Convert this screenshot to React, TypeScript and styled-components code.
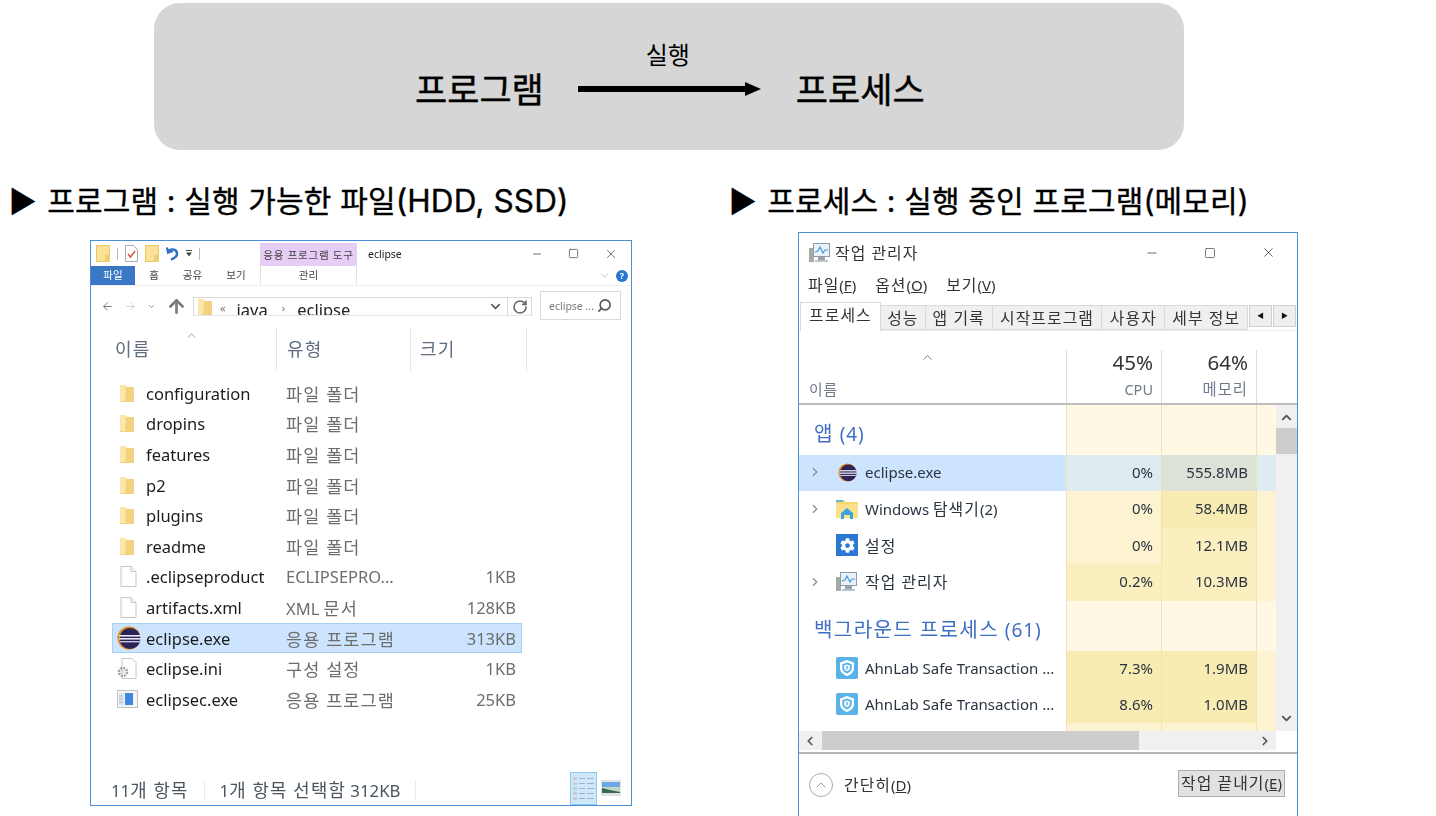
import type { ReactNode } from 'react';
import styled, { createGlobalStyle } from 'styled-components';
import { FaCog } from 'react-icons/fa';
import {
  ArrowLeft,
  ArrowRight,
  ArrowUp,
  ChevronDown,
  ChevronLeft,
  ChevronRight,
  ChevronUp,
  Minus,
  RotateCw,
  Search,
  Square,
  X,
} from 'lucide-react';

const UI_FONT = `'Noto Sans', 'Noto Sans CJK KR', sans-serif`;
const SLIDE_FONT = `'Inter', 'Noto Sans CJK KR', sans-serif`;

const GlobalStyle = createGlobalStyle`
  html, body {
    margin: 0;
    padding: 0;
    background: #fff;
  }
  * {
    box-sizing: border-box;
  }
`;

const Page = styled.div`
  width: 1436px;
  height: 816px;
  overflow: hidden;
  background: #fff;
  padding-top: 3px;
  font-family: ${SLIDE_FONT};
`;

/* top banner */
const Banner = styled.div`
  margin-left: 154px;
  width: 1030px;
  height: 147px;
  border-radius: 26px;
  background: #d6d6d6;
  padding: 38px 0 0 261px;
  display: flex;
  align-items: flex-start;
  color: #000;
`;

const BannerWord = styled.div`
  font-size: 35px;
  font-weight: 400;
  -webkit-text-stroke: 0.4px #000;
  line-height: 48px;
  height: 48px;
  margin-top: 25px;
  white-space: nowrap;
`;

const Flow = styled.div`
  width: 183px;
  margin: 0 35px 0 34px;
  text-align: center;
  font-size: 24px;
  line-height: 30px;
  padding-right: 3px;
`;

const FlowArrow = styled.svg`
  display: block;
  margin-top: 11px;
`;

const Columns = styled.div`
  display: grid;
  grid-template-columns: 722px 1fr;
  padding: 33px 0 0 7px;
`;

const Section = styled.section`
  min-width: 0;
`;

const Heading = styled.h2<{ $left: number }>`
  margin: 0 0 0 ${({ $left }) => $left}px;
  font-size: 30px;
  font-weight: 400;
  -webkit-text-stroke: 0.35px #000;
  letter-spacing: 0.15px;
  line-height: 36px;
  height: 36px;
  color: #000;
  white-space: nowrap;
`;

const Bullet = styled.span`
  margin-right: 2px;
`;

const Latin = styled.span`
  font-size: 31.5px;
`;

const Win = styled.div<{ $left: number; $top: number; $w: number; $h: number }>`
  margin-left: ${({ $left }) => $left}px;
  margin-top: ${({ $top }) => $top}px;
  width: ${({ $w }) => $w}px;
  height: ${({ $h }) => $h}px;
  border: 1px solid #4a90d6;
  background: #fff;
  font-family: ${UI_FONT};
  display: flex;
  flex-direction: column;
  overflow: hidden;
  filter: blur(0.35px);
`;

//korean glyphs of the windows are wider than the installed font
const Ko = styled.span`
  font-size: 1.06em;
  letter-spacing: 0.065em;
`;

const Accel = styled.u`
  text-underline-offset: 1px;
`;

/* explorer */
const QuickBar = styled.div`
  height: 25px;
  display: flex;
  align-items: center;
  padding-left: 5px;
  color: #444;
`;

const QuickGroup = styled.div`
  width: 164px;
  display: flex;
  align-items: center;
  gap: 7px;
`;

const BarSep = styled.span`
  width: 1px;
  height: 12px;
  background: #bbb;
`;

const ToolTab = styled.div`
  width: 97px;
  height: 23px;
  margin-top: 2px;
  align-self: flex-start;
  background: #e5cdf6;
  font-size: 10px;
  line-height: 24px;
  text-align: center;
  color: #444;
  white-space: nowrap;
`;

const WinTitle = styled.div`
  font-size: 10.5px;
  margin-left: 11px;
  color: #222;
  flex: 1;
`;

const WinControls = styled.div<{ $gap: number; $pad: number }>`
  display: flex;
  align-items: center;
  gap: ${({ $gap }) => $gap}px;
  padding-right: ${({ $pad }) => $pad}px;
  color: #333;
`;

const RibbonTabs = styled.div`
  height: 20px;
  display: flex;
  align-items: stretch;
  font-size: 10.5px;
  color: #444;
  border-bottom: 1px solid #eee;
`;

const RibbonTab = styled.div<{ $w: number; $active?: boolean; $tool?: boolean }>`
  width: ${({ $w }) => $w}px;
  text-align: center;
  line-height: 19px;
  white-space: nowrap;
  background: ${({ $active }) => ($active ? '#3a78c6' : 'transparent')};
  color: ${({ $active }) => ($active ? '#fff' : '#444')};
  border-left: ${({ $tool }) => ($tool ? '1px solid #e3e3e3' : '0')};
  border-right: ${({ $tool }) => ($tool ? '1px solid #e3e3e3' : '0')};
`;

const RibbonEnd = styled.div`
  margin-left: auto;
  padding-right: 3px;
  display: flex;
  align-items: center;
  gap: 5px;
  color: #9a9a9a;
`;

const HelpDot = styled.span`
  width: 12px;
  height: 12px;
  border-radius: 50%;
  background: #2a76d2;
  color: #fff;
  font-size: 9px;
  font-weight: 700;
  line-height: 12px;
  text-align: center;
`;

const NavBar = styled.div`
  height: 40px;
  display: flex;
  align-items: flex-start;
  padding: 5px 0 0 10px;
`;

const NavArrows = styled.div`
  width: 92px;
  height: 30px;
  display: flex;
  align-items: center;
  gap: 10px;
  color: #7a7a7a;
`;

const AddressBox = styled.div`
  width: 339px;
  height: 19px;
  margin-top: 6px;
  border: 1px solid #d9d9d9;
  border-bottom-color: #e6e6e6;
  display: flex;
  align-items: flex-start;
  overflow: hidden;
  padding-left: 4px;
  font-size: 16.5px;
  color: #222;
`;

const Crumb = styled.span<{ $left: number }>`
  margin-left: ${({ $left }) => $left}px;
  line-height: 24px;
  color: inherit;
`;

const CrumbMark = styled.span<{ $left: number }>`
  margin-left: ${({ $left }) => $left}px;
  line-height: 20px;
  font-size: 11px;
  color: #777;
`;

const AddressEnd = styled.div`
  margin-left: auto;
  display: flex;
  align-items: center;
  height: 100%;
  color: #555;
`;

const RefreshCell = styled.div`
  width: 24px;
  height: 100%;
  margin-left: 4px;
  border-left: 1px solid #d9d9d9;
  display: flex;
  align-items: center;
  justify-content: center;
  color: #666;
`;

const SearchBox = styled.div`
  width: 81px;
  height: 29px;
  margin-left: 8px;
  border: 1px solid #d9d9d9;
  display: flex;
  align-items: center;
  padding: 0 8px;
  justify-content: space-between;
  font-size: 10.5px;
  color: #777;
  white-space: nowrap;
`;

const ColumnHead = styled.div`
  height: 43px;
  margin-top: 2px;
  display: grid;
  grid-template-columns: 186px 134px 116px;
  font-size: 17px;
  color: #5f6f80;
`;

const HeadCell = styled.div<{ $pad: number }>`
  position: relative;
  padding: 8px 0 0 ${({ $pad }) => $pad}px;
  border-right: 1px solid #e3e6ea;
  line-height: 26px;
`;

const SortCaret = styled.span`
  position: absolute;
  top: -5px;
  left: 94px;
  color: #777;
`;

const FileList = styled.div`
  margin: 7px 0 0 21px;
  width: 410px;
`;

const FileRow = styled.div<{ $selected?: boolean }>`
  height: 30.6px;
  display: grid;
  grid-template-columns: 34px 140px 1fr 64px;
  align-items: center;
  font-size: 16.5px;
  white-space: nowrap;
  background: ${({ $selected }) => ($selected ? '#cce4fd' : 'transparent')};
  outline: ${({ $selected }) => ($selected ? '1px solid #a8d0f7' : '0')};
  outline-offset: -1px;
`;

const IconCell = styled.span<{ $left: number }>`
  display: flex;
  align-items: center;
  padding-left: ${({ $left }) => $left}px;
  height: 100%;
`;

const FileName = styled.span`
  color: #1c1c1c;
`;

const FileType = styled.span`
  color: #6d6d6d;
`;

const FileSize = styled.span`
  color: #6d6d6d;
  text-align: right;
  padding-right: 6px;
`;

const StatusBar = styled.div`
  margin-top: auto;
  height: 34px;
  display: flex;
  align-items: center;
  padding: 4px 0 0 20px;
  font-size: 16.8px;
  color: #4a5560;
  white-space: nowrap;
`;

const StatusPart = styled.span`
  padding-right: 15px;
  margin-right: 15px;
  border-right: 1px solid #eaeaea;
  line-height: 18px;
`;

const ViewBtn = styled.span<{ $active?: boolean }>`
  height: 33px;
  width: 27px;
  display: flex;
  align-items: center;
  justify-content: center;
  background: ${({ $active }) => ($active ? '#cde8fb' : 'transparent')};
  border: ${({ $active }) => ($active ? '1px solid #8fc9ef' : '0')};
`;

const ViewBtns = styled.div`
  margin: -4px 0 0 auto;
  padding-right: 7px;
  display: flex;
  align-items: center;
`;

/* task manager */
const TmTitle = styled.div`
  height: 39px;
  display: flex;
  align-items: center;
  padding-left: 10px;
  font-size: 15px;
  color: #333;
  gap: 5px;
  white-space: nowrap;
`;

const TmControls = styled(WinControls)`
  margin-left: auto;
  color: #444;
`;

const MenuBar = styled.div`
  height: 25px;
  display: flex;
  align-items: center;
  padding-left: 9px;
  gap: 19px;
  font-size: 15px;
  color: #333;
`;

const TabStrip = styled.div`
  height: 34px;
  display: flex;
  align-items: flex-end;
  padding: 0 1px;
  border-bottom: 1px solid #ececec;
  font-size: 15px;
  color: #333;
`;

const TmTab = styled.div<{ $w: number; $active?: boolean }>`
  width: ${({ $w }) => $w}px;
  height: ${({ $active }) => ($active ? 29 : 25)}px;
  margin-bottom: ${({ $active }) => ($active ? -1 : 0)}px;
  border: 1px solid #dadada;
  border-left-width: ${({ $active }) => ($active ? 1 : 0)}px;
  border-bottom-width: ${({ $active }) => ($active ? 0 : 1)}px;
  background: ${({ $active }) => ($active ? '#fff' : '#f0f0f0')};
  text-align: center;
  line-height: ${({ $active }) => ($active ? 24 : 24)}px;
  white-space: nowrap;
`;

const TabArrow = styled.div`
  width: 23px;
  height: 22px;
  margin: 0 0 3px 1px;
  background: #eee;
  border: 1px solid #cfcfcf;
  color: #111;
  font-size: 7px;
  line-height: 20px;
  text-align: center;
`;

const TmHead = styled.div`
  height: 74px;
  display: grid;
  grid-template-columns: 267px 95px 95px 1fr;
  border-bottom: 2px solid #bdbdbd;
  padding-top: 19px;
`;

const TmHeadName = styled.div`
  position: relative;
  padding: 28px 0 0 10px;
  font-size: 14px;
  line-height: 22px;
  color: #6d7a8a;
`;

const TmCaret = styled.span`
  position: absolute;
  top: -1px;
  left: 121px;
  color: #777;
`;

const TmHeadCol = styled.div`
  border-left: 1px solid #dcdcdc;
  text-align: right;
  padding-right: 8px;
  font-size: 14.5px;
  color: #6d7a8a;
  line-height: 21px;
`;

const TmPercent = styled.div`
  font-size: 20.5px;
  color: #333;
  line-height: 24px;
  margin-bottom: 5px;
`;

const TmBody = styled.div`
  height: 326px;
  display: flex;
  overflow: hidden;
`;

const TmRows = styled.div`
  width: 477px;
`;

const TmRow = styled.div<{ $h: number }>`
  height: ${({ $h }) => $h}px;
  display: grid;
  grid-template-columns: 267px 95px 95px 1fr;
  font-size: 15px;
  color: #2a3440;
`;

const NameCell = styled.div<{ $selected?: boolean }>`
  display: grid;
  grid-template-columns: 37px 29px 1fr;
  align-items: center;
  padding-bottom: 2px;
  white-space: nowrap;
  overflow: hidden;
  background: ${({ $selected }) => ($selected ? '#cce4fd' : '#fff')};
`;

const Twisty = styled.span`
  display: flex;
  justify-content: flex-end;
  padding-right: 14px;
  color: #8a8a8a;
`;

const GroupName = styled.div`
  padding: 11px 0 0 15px;
  font-size: 19px;
  letter-spacing: 0.9px;
  line-height: 34px;
  color: #3f6fc4;
  background: #fff;
  white-space: nowrap;
`;

const Cell = styled.div<{ $bg: string }>`
  background: ${({ $bg }) => $bg};
  border-left: 1px solid #eee2b6;
  text-align: right;
  padding-right: 8px;
  line-height: 34px;
`;

const EclipseSlot = styled.span`
  display: flex;
  padding-left: 2px;
`;

const VScroll = styled.div`
  flex: 1;
  background: #f0f0f0;
  display: flex;
  flex-direction: column;
  align-items: center;
  color: #555;
  padding-top: 5px;
`;

const VThumb = styled.div`
  width: 100%;
  height: 26px;
  margin-top: 3px;
  background: #cdcdcd;
`;

const HScroll = styled.div`
  height: 19px;
  width: 477px;
  background: #f0f0f0;
  display: flex;
  align-items: center;
  color: #555;
  padding: 0 4px;
`;

const HThumb = styled.div`
  width: 317px;
  height: 100%;
  margin: 0 auto 0 5px;
  background: #cdcdcd;
`;

const TmFooter = styled.div`
  flex: 1;
  border-top: 2px solid #b5b5b5;
  margin-top: 2px;
  display: flex;
  align-items: flex-start;
  padding: 16px 12px 0 10px;
  font-size: 15px;
  color: #333;
`;

const CollapseCircle = styled.span`
  width: 24px;
  height: 24px;
  margin-top: 3px;
  border: 1.5px solid #aaa;
  border-radius: 50%;
  display: flex;
  align-items: center;
  justify-content: center;
  color: #999;
`;

const CollapseLabel = styled.span`
  margin-left: 11px;
  line-height: 30px;
`;

const EndTaskBtn = styled.div`
  margin-left: auto;
  width: 107px;
  height: 27px;
  background: #e1e1e1;
  border: 1px solid #adadad;
  text-align: center;
  line-height: 25px;
  white-space: nowrap;
`;

/* icons */
const FolderIcon = () => (
  <svg width="15" height="19" viewBox="0 0 15 19">
    <path d="M0 1h5l2 2h7v15H0z" fill="#f4d583" />
    <path d="M0 1h6v16H0z" fill="#fbe7ac" />
    <path d="M6 3l8 0v15H5z" fill="#f2d27c" />
  </svg>
);

const DocIcon = () => (
  <svg width="17" height="21" viewBox="0 0 17 21">
    <path d="M1 .5h10l5 5v15H1z" fill="#fff" stroke="#c6c6c6" />
    <path d="M11 .5v5h5" fill="#f2f2f2" stroke="#c6c6c6" />
  </svg>
);

const EclipseIcon = ({ size = 24 }: { size?: number }) => (
  <svg width={size} height={size} viewBox="0 0 24 24">
    <circle cx="12" cy="12" r="11.5" fill="#e08a1e" />
    <circle cx="13" cy="12.5" r="10.5" fill="#2c2358" />
    <rect x="2" y="9" width="22" height="1.6" fill="#e8e8f4" />
    <rect x="2" y="12" width="22" height="1.6" fill="#e8e8f4" />
    <rect x="3" y="15" width="20" height="1.4" fill="#c9c9de" />
  </svg>
);

const IniIcon = () => (
  <svg width="21" height="21" viewBox="0 0 21 21">
    <path d="M5 .5h10l4 4v16H5z" fill="#fff" stroke="#c6c6c6" />
    <circle cx="6" cy="14" r="4" fill="none" stroke="#9aa3ab" strokeWidth="2.6" strokeDasharray="2 1.1" />
    <circle cx="6" cy="14" r="1.4" fill="#d5dade" />
  </svg>
);

const ConsoleIcon = () => (
  <svg width="21" height="19" viewBox="0 0 21 19">
    <rect x=".5" y=".5" width="20" height="17" fill="#f4f4f4" stroke="#c4c4c4" />
    <rect x="2" y="3" width="5" height="12" fill="#dfe6ee" />
    <path d="M2 6h4M2 9h4M2 12h4" stroke="#9fb6cc" />
    <rect x="8" y="3" width="8" height="12" fill="#3f86e0" />
  </svg>
);

const QuickFolder = () => (
  <svg width="14" height="17" viewBox="0 0 14 17">
    <rect x=".5" y=".5" width="13" height="16" fill="#fbe19a" stroke="#e9c864" />
    <rect x="9" y="10" width="5" height="7" fill="#f0cc72" />
  </svg>
);

const QuickCheck = () => (
  <svg width="13" height="17" viewBox="0 0 13 17">
    <path d="M.5.5h8l4 4v12H.5z" fill="#fff" stroke="#aaa" />
    <path d="M3 9l2.5 3L10 6" fill="none" stroke="#d8503a" strokeWidth="1.4" />
  </svg>
);

const UndoIcon = () => (
  <svg width="13" height="15" viewBox="0 0 13 15">
    <path d="M1 1.5l1 5 5-1.5" fill="none" stroke="#2a70c4" strokeWidth="2.2" />
    <path d="M2 5c4-3 9-1.500 9 2.500 0 3-3 5-6 6" fill="none" stroke="#2a70c4" strokeWidth="2.4" />
  </svg>
);

const DropMark = () => (
  <svg width="6" height="7" viewBox="0 0 6 7">
    <rect y="0" width="6" height="1" fill="#444" />
    <path d="M0 2.500h6L3 6.500z" fill="#444" />
  </svg>
);

const MonitorIcon = () => (
  <svg width="21" height="19" viewBox="0 0 21 19">
    <rect x="0" y="5" width="5" height="14" fill="#a8a8a8" />
    <rect x="1" y="7" width="2" height="2" fill="#74c98a" />
    <rect x="4.500" y=".5" width="16" height="13" fill="#e9f2f8" stroke="#8f9aa3" />
    <path d="M6 9l3-1 2-4 3 6 2-3h3" fill="none" stroke="#4a9ad4" strokeWidth="1.200" />
    <rect x="9" y="14" width="7" height="3" fill="#9aa3ab" />
    <rect x="6" y="17" width="13" height="2" fill="#bcc3c9" />
  </svg>
);

const ExplorerIcon = () => (
  <svg width="22" height="20" viewBox="0 0 22 20">
    <path d="M0 1h8l2 2h12v16H0z" fill="#f7d774" />
    <rect x="0" y="5" width="22" height="14" fill="#fbe08c" />
    <rect x="0" y="1" width="7" height="2" fill="#5ab4dc" />
    <path d="M5 14l6-5 6 5v6h-3v-4H8v4H5z" fill="#3ba4dc" />
  </svg>
);

const SettingsTile = styled.span`
  width: 22px;
  height: 22px;
  background: #2b78d4;
  color: #fff;
  display: flex;
  align-items: center;
  justify-content: center;
`;

const ShieldIcon = () => (
  <svg width="22" height="22" viewBox="0 0 22 22">
    <rect width="22" height="22" rx="2" fill="#58b3e8" />
    <path d="M11 3l7 2.500v5.500c0 4-3 6.500-7 8-4-1.500-7-4-7-8V5.500z" fill="#fff" />
    <path d="M11 5.500l4.700 1.700v3.800c0 2.700-2 4.400-4.700 5.500-2.700-1.100-4.700-2.800-4.700-5.500V7.200z" fill="#58b3e8" />
    <path d="M11 7.500l2.800 1v2.500c0 1.600-1.200 2.600-2.800 3.300-1.600-.7-2.800-1.700-2.800-3.300V8.500z" fill="#fff" />
    <rect x="10.300" y="9" width="1.400" height="3.500" fill="#58b3e8" />
  </svg>
);

const DetailsIcon = () => (
  <svg width="22" height="25" viewBox="0 0 22 25">
    {[2, 7, 12, 17, 22].map((y) => (
      <g key={y}>
        <rect x="0" y={y - 1} width="4" height="3" fill="#c3cdd5" />
        <rect x="6" y={y} width="6" height="1" fill="#9fb3c2" />
        <rect x="14" y={y} width="7" height="1" fill="#9fb3c2" />
      </g>
    ))}
  </svg>
);

const PictureIcon = () => (
  <svg width="20" height="16" viewBox="0 0 20 16">
    <rect width="20" height="16" fill="#e2e2e2" />
    <rect x="1" y="2" width="18" height="5" fill="#6fa6e8" />
    <rect x="1" y="7" width="18" height="5" fill="#bcd9c2" />
    <path d="M1 8l8 2 10 2v1H1z" fill="#39675a" />
  </svg>
);

type FileItem = {
  name: string;
  type: ReactNode;
  size?: string;
  icon: 'folder' | 'doc' | 'eclipse' | 'ini' | 'console';
  selected?: boolean;
};

const files: FileItem[] = [
  { name: 'configuration', type: <Ko>파일 폴더</Ko>, icon: 'folder' },
  { name: 'dropins', type: <Ko>파일 폴더</Ko>, icon: 'folder' },
  { name: 'features', type: <Ko>파일 폴더</Ko>, icon: 'folder' },
  { name: 'p2', type: <Ko>파일 폴더</Ko>, icon: 'folder' },
  { name: 'plugins', type: <Ko>파일 폴더</Ko>, icon: 'folder' },
  { name: 'readme', type: <Ko>파일 폴더</Ko>, icon: 'folder' },
  { name: '.eclipseproduct', type: 'ECLIPSEPRO...', size: '1KB', icon: 'doc' },
  { name: 'artifacts.xml', type: <>XML <Ko>문서</Ko></>, size: '128KB', icon: 'doc' },
  { name: 'eclipse.exe', type: <Ko>응용 프로그램</Ko>, size: '313KB', icon: 'eclipse', selected: true },
  { name: 'eclipse.ini', type: <Ko>구성 설정</Ko>, size: '1KB', icon: 'ini' },
  { name: 'eclipsec.exe', type: <Ko>응용 프로그램</Ko>, size: '25KB', icon: 'console' },
];

const fileIcon = (icon: FileItem['icon']) => {
  if (icon === 'folder') return <FolderIcon />;
  if (icon === 'doc') return <DocIcon />;
  if (icon === 'eclipse') return <EclipseIcon />;
  if (icon === 'ini') return <IniIcon />;
  return <ConsoleIcon />;
};

//heat colours of the task manager cells
const PALE = '#fff8e4';
const LIGHT = '#fdf3d0';
const MID = '#fbefc0';
const STRONG = '#f8ecb2';

const Explorer = () => (
  <Win $left={83} $top={21} $w={542} $h={566}>
    <QuickBar>
      <QuickGroup>
        <QuickFolder />
        <BarSep />
        <QuickCheck />
        <QuickFolder />
        <UndoIcon />
        <DropMark />
        <BarSep />
      </QuickGroup>
      <ToolTab>
        <Ko>응용 프로그램 도구</Ko>
      </ToolTab>
      <WinTitle>eclipse</WinTitle>
      <WinControls $gap={25} $pad={13}>
        <Minus size={12} strokeWidth={1.4} />
        <Square size={11} strokeWidth={1.4} />
        <X size={14} strokeWidth={1.2} />
      </WinControls>
    </QuickBar>
    <RibbonTabs>
      <RibbonTab $w={44} $active>파일</RibbonTab>
      <RibbonTab $w={38}>홈</RibbonTab>
      <RibbonTab $w={39}>공유</RibbonTab>
      <RibbonTab $w={48}>보기</RibbonTab>
      <RibbonTab $w={97} $tool>관리</RibbonTab>
      <RibbonEnd>
        <ChevronDown size={13} strokeWidth={1.2} />
        <HelpDot>?</HelpDot>
      </RibbonEnd>
    </RibbonTabs>
    <NavBar>
      <NavArrows>
        <ArrowLeft size={13} strokeWidth={1.8} />
        <ArrowRight size={13} strokeWidth={1.8} color="#d4d4d4" />
        <ChevronDown size={9} strokeWidth={2} />
        <ArrowUp size={21} strokeWidth={3} />
      </NavArrows>
      <AddressBox>
        <FolderIcon />
        <CrumbMark $left={7}>«</CrumbMark>
        <Crumb $left={11}>java</Crumb>
        <CrumbMark $left={14}>›</CrumbMark>
        <Crumb $left={12}>eclipse</Crumb>
        <AddressEnd>
          <ChevronDown size={15} strokeWidth={2.4} />
          <RefreshCell>
            <RotateCw size={16} strokeWidth={2.4} />
          </RefreshCell>
        </AddressEnd>
      </AddressBox>
      <SearchBox>
        eclipse ...
        <Search size={15} strokeWidth={2.6} color="#555" style={{ transform: 'scaleX(-1)' }} />
      </SearchBox>
    </NavBar>
    <ColumnHead>
      <HeadCell $pad={24}>
        <Ko>이름</Ko>
        <SortCaret>
          <ChevronUp size={13} strokeWidth={1.4} />
        </SortCaret>
      </HeadCell>
      <HeadCell $pad={10}>
        <Ko>유형</Ko>
      </HeadCell>
      <HeadCell $pad={9}>
        <Ko>크기</Ko>
      </HeadCell>
    </ColumnHead>
    <FileList>
      {files.map((file) => (
        <FileRow key={file.name} $selected={file.selected}>
          <IconCell $left={file.icon === 'folder' || file.icon === 'doc' ? 8 : 5}>{fileIcon(file.icon)}</IconCell>
          <FileName>{file.name}</FileName>
          <FileType>{file.type}</FileType>
          <FileSize>{file.size}</FileSize>
        </FileRow>
      ))}
    </FileList>
    <StatusBar>
      <StatusPart>
        11<Ko>개 항목</Ko>
      </StatusPart>
      <StatusPart>
        1<Ko>개 항목 선택함</Ko> 312KB
      </StatusPart>
      <ViewBtns>
        <ViewBtn $active>
          <DetailsIcon />
        </ViewBtn>
        <ViewBtn>
          <PictureIcon />
        </ViewBtn>
      </ViewBtns>
    </StatusBar>
  </Win>
);

const AppRow = ({
  h,
  icon,
  name,
  cpu,
  mem,
  twisty,
  colors,
  selected,
}: {
  h: number;
  icon: ReactNode;
  name: ReactNode;
  cpu: string;
  mem: string;
  twisty?: boolean;
  colors: [string, string, string];
  selected?: boolean;
}) => (
  <TmRow $h={h}>
    <NameCell $selected={selected}>
      <Twisty>{twisty && <ChevronRight size={14} strokeWidth={2} />}</Twisty>
      {icon}
      <span>{name}</span>
    </NameCell>
    <Cell $bg={colors[0]}>{cpu}</Cell>
    <Cell $bg={colors[1]}>{mem}</Cell>
    <Cell $bg={colors[2]} />
  </TmRow>
);

const GroupRow = ({ title }: { title: ReactNode }) => (
  <TmRow $h={50}>
    <GroupName>{title}</GroupName>
    <Cell $bg={PALE} />
    <Cell $bg={PALE} />
    <Cell $bg={PALE} />
  </TmRow>
);

const TaskManager = () => (
  <Win $left={69} $top={13} $w={500} $h={600}>
    <TmTitle>
      <MonitorIcon />
      <Ko>작업 관리자</Ko>
      <TmControls $gap={45} $pad={21}>
        <Minus size={14} strokeWidth={1.4} />
        <Square size={12} strokeWidth={1.4} />
        <X size={15} strokeWidth={1.3} />
      </TmControls>
    </TmTitle>
    <MenuBar>
      <span>
        <Ko>파일</Ko>(<Accel>F</Accel>)
      </span>
      <span>
        <Ko>옵션</Ko>(<Accel>O</Accel>)
      </span>
      <span>
        <Ko>보기</Ko>(<Accel>V</Accel>)
      </span>
    </MenuBar>
    <TabStrip>
      <TmTab $w={81} $active>
        <Ko>프로세스</Ko>
      </TmTab>
      <TmTab $w={45}>
        <Ko>성능</Ko>
      </TmTab>
      <TmTab $w={67}>
        <Ko>앱 기록</Ko>
      </TmTab>
      <TmTab $w={110}>
        <Ko>시작프로그램</Ko>
      </TmTab>
      <TmTab $w={63}>
        <Ko>사용자</Ko>
      </TmTab>
      <TmTab $w={83}>
        <Ko>세부 정보</Ko>
      </TmTab>
      <TabArrow>◀</TabArrow>
      <TabArrow>▶</TabArrow>
    </TabStrip>
    <TmHead>
      <TmHeadName>
        <Ko>이름</Ko>
        <TmCaret>
          <ChevronUp size={15} strokeWidth={1.5} />
        </TmCaret>
      </TmHeadName>
      <TmHeadCol>
        <TmPercent>45%</TmPercent>
        CPU
      </TmHeadCol>
      <TmHeadCol>
        <TmPercent>64%</TmPercent>
        <Ko>메모리</Ko>
      </TmHeadCol>
      <TmHeadCol />
    </TmHead>
    <TmBody>
      <TmRows>
        <GroupRow title={<><Ko>앱</Ko> (4)</>} />
        <AppRow
          h={36}
          twisty
          selected
          icon={
            <EclipseSlot>
              <EclipseIcon size={19} />
            </EclipseSlot>
          }
          name="eclipse.exe"
          cpu="0%"
          mem="555.8MB"
          colors={['#deebf0', '#dde2d8', '#deebf0']}
        />
        <AppRow
          h={37}
          twisty
          icon={<ExplorerIcon />}
          name={<>Windows <Ko>탐색기</Ko>(2)</>}
          cpu="0%"
          mem="58.4MB"
          colors={[LIGHT, STRONG, LIGHT]}
        />
        <AppRow
          h={36}
          icon={
            <SettingsTile>
              <FaCog size={15} />
            </SettingsTile>
          }
          name={<Ko>설정</Ko>}
          cpu="0%"
          mem="12.1MB"
          colors={[LIGHT, MID, LIGHT]}
        />
        <AppRow
          h={37}
          twisty
          icon={<MonitorIcon />}
          name={<Ko>작업 관리자</Ko>}
          cpu="0.2%"
          mem="10.3MB"
          colors={[MID, MID, LIGHT]}
        />
        <GroupRow title={<><Ko>백그라운드 프로세스</Ko> (61)</>} />
        <AppRow
          h={36}
          icon={<ShieldIcon />}
          name="AhnLab Safe Transaction ..."
          cpu="7.3%"
          mem="1.9MB"
          colors={[STRONG, STRONG, LIGHT]}
        />
        <AppRow
          h={36}
          icon={<ShieldIcon />}
          name="AhnLab Safe Transaction ..."
          cpu="8.6%"
          mem="1.0MB"
          colors={[STRONG, STRONG, LIGHT]}
        />
        <TmRow $h={8}>
          <NameCell />
          <Cell $bg={LIGHT} />
          <Cell $bg={LIGHT} />
          <Cell $bg={LIGHT} />
        </TmRow>
      </TmRows>
      <VScroll>
        <ChevronUp size={15} strokeWidth={3} />
        <VThumb />
        <ChevronDown size={15} strokeWidth={3} style={{ marginTop: 'auto', marginBottom: 5 }} />
      </VScroll>
    </TmBody>
    <HScroll>
      <ChevronLeft size={14} strokeWidth={3} />
      <HThumb />
      <ChevronRight size={14} strokeWidth={3} />
    </HScroll>
    <TmFooter>
      <CollapseCircle>
        <ChevronUp size={16} strokeWidth={1.5} />
      </CollapseCircle>
      <CollapseLabel>
        <Ko>간단히</Ko>(<Accel>D</Accel>)
      </CollapseLabel>
      <EndTaskBtn>
        <Ko>작업 끝내기</Ko>(<Accel>E</Accel>)
      </EndTaskBtn>
    </TmFooter>
  </Win>
);

const App = () => (
  <Page>
    <GlobalStyle />
    <Banner>
      <BannerWord>프로그램</BannerWord>
      <Flow>
        실행
        <FlowArrow width="183" height="14" viewBox="0 0 183 14">
          <rect x="0" y="4" width="170" height="6" fill="#000" />
          <path d="M167 0l16 7-16 7z" fill="#000" />
        </FlowArrow>
      </Flow>
      <BannerWord>프로세스</BannerWord>
    </Banner>
    <Columns>
      <Section>
        <Heading $left={2}>
          <Bullet>▶</Bullet> 프로그램 : 실행 가능한 파일<Latin>(HDD, SSD)</Latin>
        </Heading>
        <Explorer />
      </Section>
      <Section>
        <Heading $left={0}>
          <Bullet>▶</Bullet> 프로세스 : 실행 중인 프로그램(메모리)
        </Heading>
        <TaskManager />
      </Section>
    </Columns>
  </Page>
);

export default App;
